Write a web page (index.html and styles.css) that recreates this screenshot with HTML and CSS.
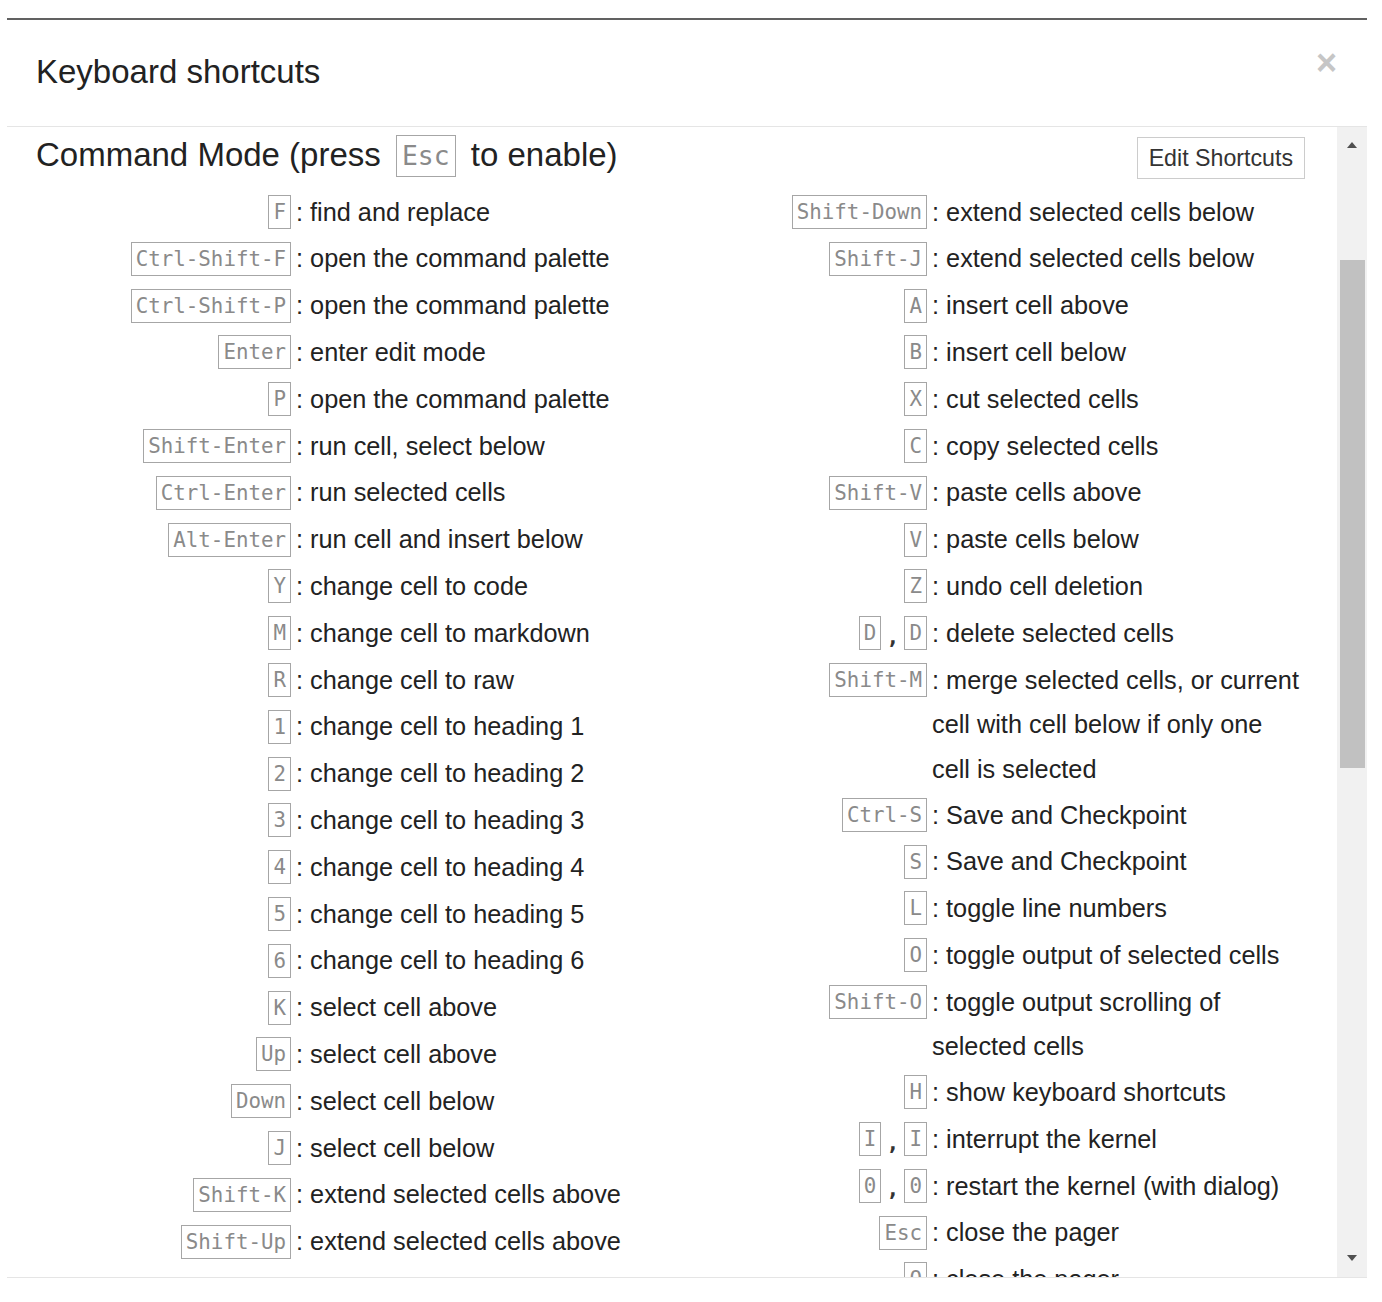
FILE: index.html
```html
<!DOCTYPE html>
<html>
<head>
<meta charset="utf-8">
<title>Keyboard shortcuts</title>
<link rel="stylesheet" href="styles.css">
</head>
<body>
<div class="modal">
  <div class="modal-header">
    <h4 class="modal-title">Keyboard shortcuts</h4>
    <span class="close">×</span>
  </div>
  <div class="modal-body">
    <div class="content">
      <div class="cmd-head">
        <h4 class="mode-title">Command Mode (press <kbd>Esc</kbd> to enable)</h4>
        <button class="btn">Edit Shortcuts</button>
      </div>
      <div class="cols">
        <div class="col">
          <div class="qh"><span class="key"><kbd>F</kbd></span><span class="desc">: find and replace</span></div>
          <div class="qh"><span class="key"><kbd>Ctrl-Shift-F</kbd></span><span class="desc">: open the command palette</span></div>
          <div class="qh"><span class="key"><kbd>Ctrl-Shift-P</kbd></span><span class="desc">: open the command palette</span></div>
          <div class="qh"><span class="key"><kbd>Enter</kbd></span><span class="desc">: enter edit mode</span></div>
          <div class="qh"><span class="key"><kbd>P</kbd></span><span class="desc">: open the command palette</span></div>
          <div class="qh"><span class="key"><kbd>Shift-Enter</kbd></span><span class="desc">: run cell, select below</span></div>
          <div class="qh"><span class="key"><kbd>Ctrl-Enter</kbd></span><span class="desc">: run selected cells</span></div>
          <div class="qh"><span class="key"><kbd>Alt-Enter</kbd></span><span class="desc">: run cell and insert below</span></div>
          <div class="qh"><span class="key"><kbd>Y</kbd></span><span class="desc">: change cell to code</span></div>
          <div class="qh"><span class="key"><kbd>M</kbd></span><span class="desc">: change cell to markdown</span></div>
          <div class="qh"><span class="key"><kbd>R</kbd></span><span class="desc">: change cell to raw</span></div>
          <div class="qh"><span class="key"><kbd>1</kbd></span><span class="desc">: change cell to heading 1</span></div>
          <div class="qh"><span class="key"><kbd>2</kbd></span><span class="desc">: change cell to heading 2</span></div>
          <div class="qh"><span class="key"><kbd>3</kbd></span><span class="desc">: change cell to heading 3</span></div>
          <div class="qh"><span class="key"><kbd>4</kbd></span><span class="desc">: change cell to heading 4</span></div>
          <div class="qh"><span class="key"><kbd>5</kbd></span><span class="desc">: change cell to heading 5</span></div>
          <div class="qh"><span class="key"><kbd>6</kbd></span><span class="desc">: change cell to heading 6</span></div>
          <div class="qh"><span class="key"><kbd>K</kbd></span><span class="desc">: select cell above</span></div>
          <div class="qh"><span class="key"><kbd>Up</kbd></span><span class="desc">: select cell above</span></div>
          <div class="qh"><span class="key"><kbd>Down</kbd></span><span class="desc">: select cell below</span></div>
          <div class="qh"><span class="key"><kbd>J</kbd></span><span class="desc">: select cell below</span></div>
          <div class="qh"><span class="key"><kbd>Shift-K</kbd></span><span class="desc">: extend selected cells above</span></div>
          <div class="qh"><span class="key"><kbd>Shift-Up</kbd></span><span class="desc">: extend selected cells above</span></div>
        </div>
        <div class="col col-right">
          <div class="qh"><span class="key"><kbd>Shift-Down</kbd></span><span class="desc">: extend selected cells below</span></div>
          <div class="qh"><span class="key"><kbd>Shift-J</kbd></span><span class="desc">: extend selected cells below</span></div>
          <div class="qh"><span class="key"><kbd>A</kbd></span><span class="desc">: insert cell above</span></div>
          <div class="qh"><span class="key"><kbd>B</kbd></span><span class="desc">: insert cell below</span></div>
          <div class="qh"><span class="key"><kbd>X</kbd></span><span class="desc">: cut selected cells</span></div>
          <div class="qh"><span class="key"><kbd>C</kbd></span><span class="desc">: copy selected cells</span></div>
          <div class="qh"><span class="key"><kbd>Shift-V</kbd></span><span class="desc">: paste cells above</span></div>
          <div class="qh"><span class="key"><kbd>V</kbd></span><span class="desc">: paste cells below</span></div>
          <div class="qh"><span class="key"><kbd>Z</kbd></span><span class="desc">: undo cell deletion</span></div>
          <div class="qh"><span class="key"><kbd>D</kbd><span class="sep">,</span><kbd>D</kbd></span><span class="desc">: delete selected cells</span></div>
          <div class="qh"><span class="key"><kbd>Shift-M</kbd></span><span class="desc">: merge selected cells, or current cell with cell below if only one cell is selected</span></div>
          <div class="qh"><span class="key"><kbd>Ctrl-S</kbd></span><span class="desc">: Save and Checkpoint</span></div>
          <div class="qh"><span class="key"><kbd>S</kbd></span><span class="desc">: Save and Checkpoint</span></div>
          <div class="qh"><span class="key"><kbd>L</kbd></span><span class="desc">: toggle line numbers</span></div>
          <div class="qh"><span class="key"><kbd>O</kbd></span><span class="desc">: toggle output of selected cells</span></div>
          <div class="qh"><span class="key"><kbd>Shift-O</kbd></span><span class="desc">: toggle output scrolling of selected cells</span></div>
          <div class="qh"><span class="key"><kbd>H</kbd></span><span class="desc">: show keyboard shortcuts</span></div>
          <div class="qh"><span class="key"><kbd>I</kbd><span class="sep">,</span><kbd>I</kbd></span><span class="desc">: interrupt the kernel</span></div>
          <div class="qh"><span class="key"><kbd>0</kbd><span class="sep">,</span><kbd>0</kbd></span><span class="desc">: restart the kernel (with dialog)</span></div>
          <div class="qh"><span class="key"><kbd>Esc</kbd></span><span class="desc">: close the pager</span></div>
          <div class="qh"><span class="key"><kbd>Q</kbd></span><span class="desc">: close the pager</span></div>
        </div>
      </div>
    </div>
    <div class="scrollbar">
      <span class="arrow-up"></span>
      <span class="thumb"></span>
      <span class="arrow-down"></span>
    </div>
  </div>
</div>
</body>
</html>
```

FILE: styles.css
```css
* { box-sizing: border-box; }

html, body {
  margin: 0;
  padding: 0;
  background: #ffffff;
}

body {
  font-family: "Liberation Sans", Arial, sans-serif;
  color: #222222;
}

.modal {
  margin: 18px 0 0 7px;
  width: 1360px;
  border-top: 2px solid #616161;
}

.modal-header {
  height: 107px;
  padding: 34px 30px 0 29px;
  border-bottom: 1px solid #e5e5e5;
  display: flex;
  justify-content: space-between;
  align-items: flex-start;
}

.modal-title {
  margin: 0;
  font-weight: normal;
  font-size: 33px;
  line-height: 36px;
  color: #222222;
}

.close {
  font-family: "Liberation Sans", Arial, sans-serif;
  font-weight: bold;
  font-size: 36px;
  line-height: 36px;
  color: #c6c6c6;
  margin-top: -9px;
}

.modal-body {
  display: flex;
  height: 1151px;
  border-bottom: 1px solid #e5e5e5;
}

.content {
  flex: 1;
  overflow: hidden;
  padding: 0 29px;
}

.cmd-head {
  height: 61.6px;
  padding-top: 8px;
  display: flex;
  justify-content: space-between;
  align-items: flex-start;
}

.mode-title {
  margin: 0;
  font-weight: normal;
  font-size: 33px;
  line-height: 38px;
  color: #222222;
}

.mode-title kbd {
  font-size: 26.4px;
  line-height: 40px;
  padding: 0 5px;
  vertical-align: 1px;
  margin: 0 6px 0 6px;
}

.btn {
  margin: 2px 3px 0 0;
  height: 42px;
  padding: 0 11px;
  border: 1px solid #cccccc;
  background: #ffffff;
  font-family: "Liberation Sans", Arial, sans-serif;
  font-size: 23.2px;
  color: #333333;
  line-height: 40px;
}

.cols {
  display: grid;
  grid-template-columns: 1fr 1fr;
}

.col-right {
  padding-right: 6px;
}

.qh {
  display: flex;
  align-items: flex-start;
  min-height: 46.8px;
}

.key {
  flex: none;
  width: 255px;
  height: 46.8px;
  display: flex;
  justify-content: flex-end;
  align-items: center;
}

kbd {
  display: inline-block;
  font-family: "DejaVu Sans Mono", "Liberation Mono", monospace;
  font-size: 20.8px;
  line-height: 32px;
  padding: 0 4px;
  border: 1px solid #a6a6a6;
  color: #8a8a8a;
  background: #ffffff;
}

.sep {
  font-family: "DejaVu Sans Mono", monospace;
  font-weight: bold;
  font-size: 22px;
  color: #333333;
  margin: 6px 5px 0 5px;
}

.desc {
  flex: 1;
  padding-left: 5px;
  padding-top: 1.1px;
  font-size: 25.3px;
  line-height: 44.6px;
  color: #222222;
}

.scrollbar {
  flex: none;
  width: 30px;
  background: #f1f1f1;
  display: flex;
  flex-direction: column;
  align-items: center;
}

.arrow-up {
  margin-top: 15px;
  width: 0;
  height: 0;
  border-left: 5px solid transparent;
  border-right: 5px solid transparent;
  border-bottom: 6px solid #505050;
}

.thumb {
  margin-top: 112px;
  width: 25px;
  height: 508px;
  background: #c1c1c1;
}

.arrow-down {
  margin-top: auto;
  margin-bottom: 16px;
  width: 0;
  height: 0;
  border-left: 5px solid transparent;
  border-right: 5px solid transparent;
  border-top: 6px solid #505050;
}
```
